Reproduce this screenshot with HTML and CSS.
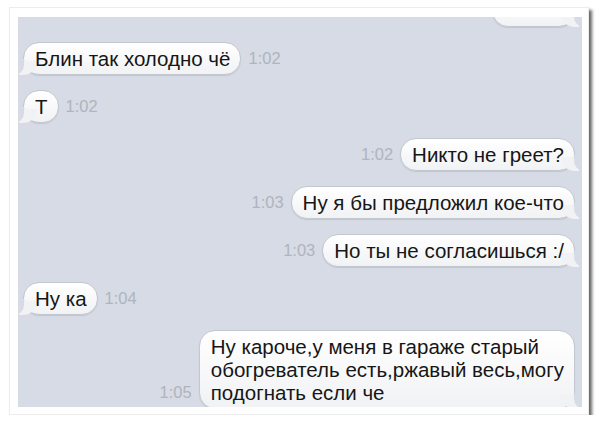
FILE: index.html
```html
<!DOCTYPE html>
<html lang="ru">
<head>
  <meta charset="UTF-8" />
  <meta name="viewport" content="width=device-width, initial-scale=1" />
  <title>Сообщения</title>
  <link rel="stylesheet" href="styles.css">
</head>
<body>

  <div class="frame">
    <main class="chat">

      <!-- bottom of an earlier message, scrolled out of view -->
      <div class="row out cut">
        <div class="bubble empty"></div>
      </div>

      <div class="row in">
        <div class="bubble">Блин так холодно чё</div>
        <span class="time">1:02</span>
      </div>

      <div class="row in">
        <div class="bubble">Т</div>
        <span class="time">1:02</span>
      </div>

      <div class="row out">
        <span class="time">1:02</span>
        <div class="bubble">Никто не греет?</div>
      </div>

      <div class="row out">
        <span class="time">1:03</span>
        <div class="bubble">Ну я бы предложил кое-что</div>
      </div>

      <div class="row out">
        <span class="time">1:03</span>
        <div class="bubble">Но ты не согласишься :/</div>
      </div>

      <div class="row in">
        <div class="bubble">Ну ка</div>
        <span class="time">1:04</span>
      </div>

      <div class="row out">
        <span class="time">1:05</span>
        <div class="bubble">Ну кароче,у меня в гараже старый<br>обогреватель есть,ржавый весь,могу<br>подогнать если че</div>
      </div>

    </main>
  </div>

</body>
</html>
```

FILE: styles.css
```css
body {
  margin: 0;
  background: #fff;
  font-family: "Liberation Sans", Arial, sans-serif;
}

.frame {
  box-sizing: border-box;
  width: 580px;
  height: 408px;
  margin: 7px 0 0 9px;
  padding: 9px 6px 7px 8px;
  background: #fff;
  border: 1px solid #ececec;
  box-shadow: 3px 3px 3px rgba(0, 0, 0, 0.6);
}

.chat {
  box-sizing: border-box;
  height: 100%;
  padding: 0 7px 0 5px;
  background: #d6dbe5;
  overflow: hidden;
  display: flex;
  flex-direction: column;
  gap: 15px;
}

.row {
  display: flex;
  align-items: flex-end;
  gap: 7px;
  flex-shrink: 0;
}

.row.out {
  justify-content: flex-end;
}

.row.cut {
  margin-top: -23px;
}

.bubble {
  position: relative;
  z-index: 0;
  padding: 4px 10px 4px 11px;
  font-size: 20.5px;
  line-height: 23px;
  color: #161616;
  background: linear-gradient(#ffffff, #f1f2f4);
  border: 1px solid #c3c7cf;
  border-radius: 16px;
  box-shadow: 0 1px 1px rgba(0, 0, 0, 0.1);
}

.bubble.empty {
  width: 60px;
  height: 23px;
}

/* little tails at the bottom corner */
.bubble::before,
.bubble::after {
  content: "";
  position: absolute;
  bottom: -1px;
  z-index: -1;
}

.in .bubble::before {
  left: -5px;
  width: 18px;
  height: 14px;
  background: #f1f2f4;
  border-bottom-right-radius: 15px 12px;
}

.in .bubble::after {
  left: -10px;
  width: 10px;
  height: 16px;
  background: #d6dbe5;
  border-bottom-right-radius: 10px;
}

.out .bubble::before {
  right: -5px;
  width: 18px;
  height: 14px;
  background: #f1f2f4;
  border-bottom-left-radius: 15px 12px;
}

.out .bubble::after {
  right: -10px;
  width: 10px;
  height: 16px;
  background: #d6dbe5;
  border-bottom-left-radius: 10px;
}

.time {
  font-size: 16.5px;
  line-height: 18px;
  color: #b0b4bd;
  margin-bottom: 8px;
}
```
